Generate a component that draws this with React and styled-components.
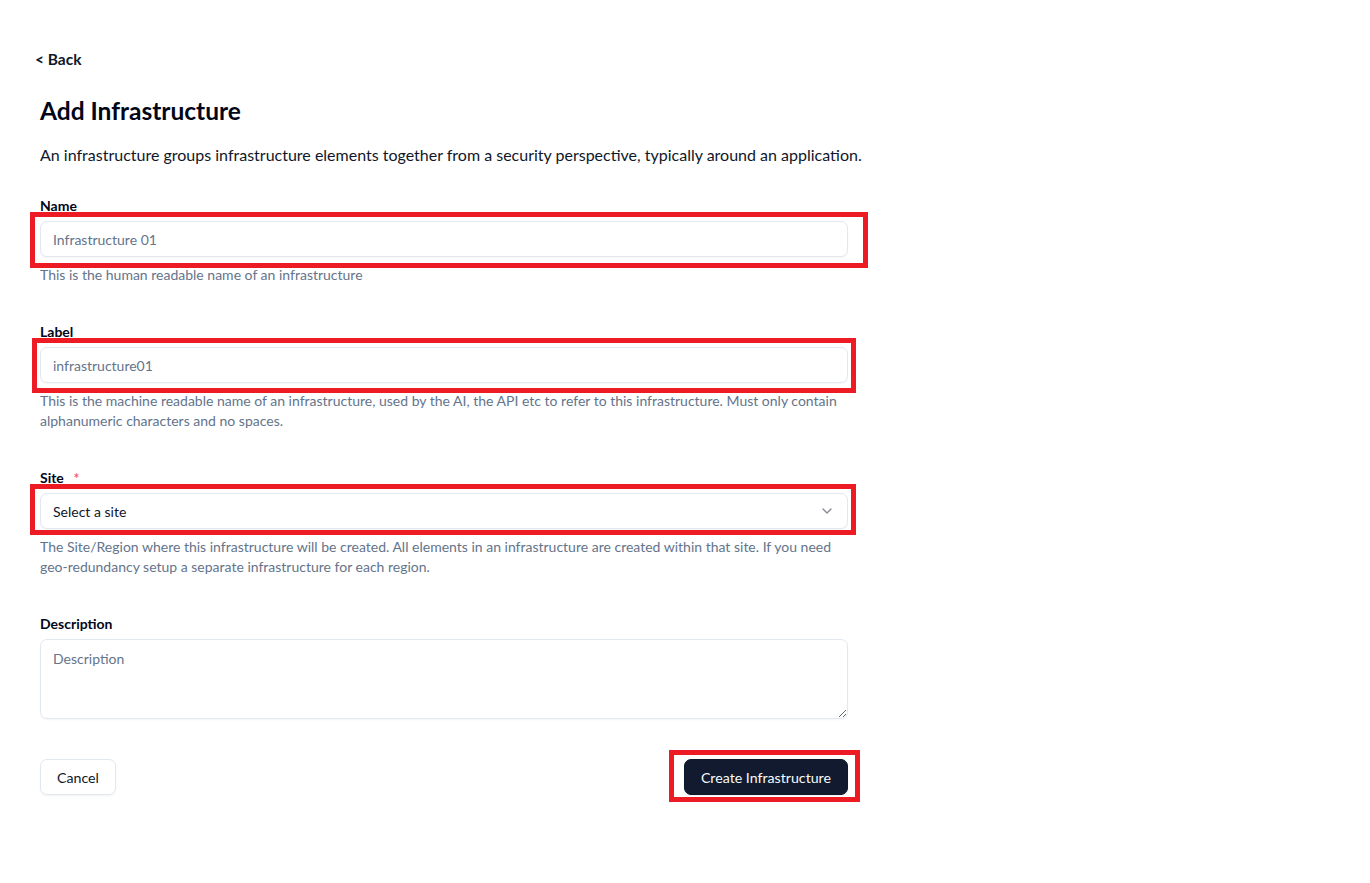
import React from 'react'
import styled, { createGlobalStyle } from 'styled-components'
import { ChevronDown } from 'lucide-react'

const GlobalStyle = createGlobalStyle`
  * { box-sizing: border-box; }
  body {
    margin: 0;
    background: #ffffff;
    font-family: Lato, "Noto Sans", sans-serif;
    color: #0f172a;
  }
`

export default function App() {
  return (
    <Page>
      <GlobalStyle />
      <BackLink href="#">&lt; Back</BackLink>
      <Title>Add Infrastructure</Title>
      <Intro>
        An infrastructure groups infrastructure elements together from a security perspective, typically around an application.
      </Intro>
      <Form>
        <Field>
          <Label>Name</Label>
          <Highlight $t={-9} $r={-20} $b={-11} $l={-10}>
            <Input placeholder="Infrastructure 01" />
          </Highlight>
          <Help>This is the human readable name of an infrastructure</Help>
        </Field>
        <Field>
          <Label>Label</Label>
          <Highlight $t={-9} $r={-8} $b={-10} $l={-8}>
            <Input placeholder="infrastructure01" />
          </Highlight>
          <Help>
            This is the machine readable name of an infrastructure, used by the AI, the API etc to refer to this infrastructure. Must only contain alphanumeric characters and no spaces.
          </Help>
        </Field>
        <Field>
          <Label>Site <Required>*</Required></Label>
          <Highlight $t={-9} $r={-8} $b={-6} $l={-10}>
            <Select type="button">
              <span>Select a site</span>
              <ChevronDown size={16} strokeWidth={2} color="#0f172a" opacity={0.5} />
            </Select>
          </Highlight>
          <Help>
            The Site/Region where this infrastructure will be created. All elements in an infrastructure are created within that site. If you need geo-redundancy setup a separate infrastructure for each region.
          </Help>
        </Field>
        <Field>
          <Label>Description</Label>
          <TextArea placeholder="Description" />
        </Field>
        <Actions>
          <Button type="button">Cancel</Button>
          <Highlight $t={-9} $r={-12} $b={-7} $l={-15}>
            <Button type="button" $primary>Create Infrastructure</Button>
          </Highlight>
        </Actions>
      </Form>
    </Page>
  )
}

const Page = styled.main`
  padding: 49px 0 60px 40px;
  width: 848px;
`

const BackLink = styled.a`
  display: inline-block;
  margin-left: -5px;
  font-size: 15.5px;
  line-height: 20px;
  font-weight: 700;
  color: #0f172a;
  text-decoration: none;
`

const Title = styled.h1`
  margin: 26px 0 0;
  font-size: 24.5px;
  line-height: 32px;
  font-weight: 700;
  color: #020617;
`

const Intro = styled.p`
  margin: 16px 0 0;
  font-size: 16px;
  line-height: 24px;
  color: #0f172a;
  white-space: nowrap;
`

const Form = styled.form`
  width: 808px;
  margin-top: 29px;
  display: flex;
  flex-direction: column;
  gap: 37px;
`

const Field = styled.div`
  display: flex;
  flex-direction: column;
`

const Label = styled.label`
  height: 20px;
  font-size: 14px;
  line-height: 20px;
  font-weight: 700;
  color: #020617;
  margin-bottom: 5px;
`

const Required = styled.span`
  color: #ef4444;
  margin-left: 6px;
  font-weight: 400;
  font-size: 15px;
  line-height: 0;
  position: relative;
  top: 1px;
`

const Highlight = styled.div`
  position: relative;
  display: flex;
  flex-direction: column;
  &::after {
    content: '';
    position: absolute;
    top: ${p => p.$t}px;
    right: ${p => p.$r}px;
    bottom: ${p => p.$b}px;
    left: ${p => p.$l}px;
    border: 5px solid #ed1c24;
    pointer-events: none;
  }
`

const Input = styled.input`
  height: 36px;
  width: 100%;
  padding: 0 12px;
  border: 1px solid #e2e8f0;
  border-radius: 7px;
  background: #fff;
  font-family: inherit;
  font-size: 14px;
  color: #0f172a;
  outline: none;
  box-shadow: 0 1px 2px rgba(15, 23, 42, 0.04);
  &::placeholder { color: #64748b; }
`

const Select = styled.button`
  height: 36px;
  width: 100%;
  padding: 0 12px;
  display: flex;
  align-items: center;
  justify-content: space-between;
  border: 1px solid #e2e8f0;
  border-radius: 7px;
  background: #fff;
  font-family: inherit;
  font-size: 14px;
  color: #0f172a;
  box-shadow: 0 1px 2px rgba(15, 23, 42, 0.04);
  cursor: pointer;
`

const Help = styled.p`
  margin: 8px 0 0;
  font-size: 14px;
  line-height: 20px;
  color: #64748b;
`

const TextArea = styled.textarea`
  height: 80px;
  width: 100%;
  padding: 10px 12px;
  border: 1px solid #e2e8f0;
  border-radius: 7px;
  font-family: inherit;
  font-size: 14px;
  line-height: 18px;
  color: #0f172a;
  outline: none;
  box-shadow: 0 1px 2px rgba(15, 23, 42, 0.04);
  &::placeholder { color: #64748b; }
`

const Actions = styled.div`
  display: flex;
  justify-content: space-between;
  align-items: center;
  margin-top: 3px;
`

const Button = styled.button`
  height: 36px;
  padding: 0 16px;
  border-radius: 7px;
  font-family: inherit;
  font-size: 14.2px;
  cursor: pointer;
  border: 1px solid ${p => (p.$primary ? '#0f172a' : '#e2e8f0')};
  background: ${p => (p.$primary ? '#111a2e' : '#ffffff')};
  color: ${p => (p.$primary ? '#f8fafc' : '#0f172a')};
  box-shadow: 0 1px 2px rgba(15, 23, 42, 0.05);
`
